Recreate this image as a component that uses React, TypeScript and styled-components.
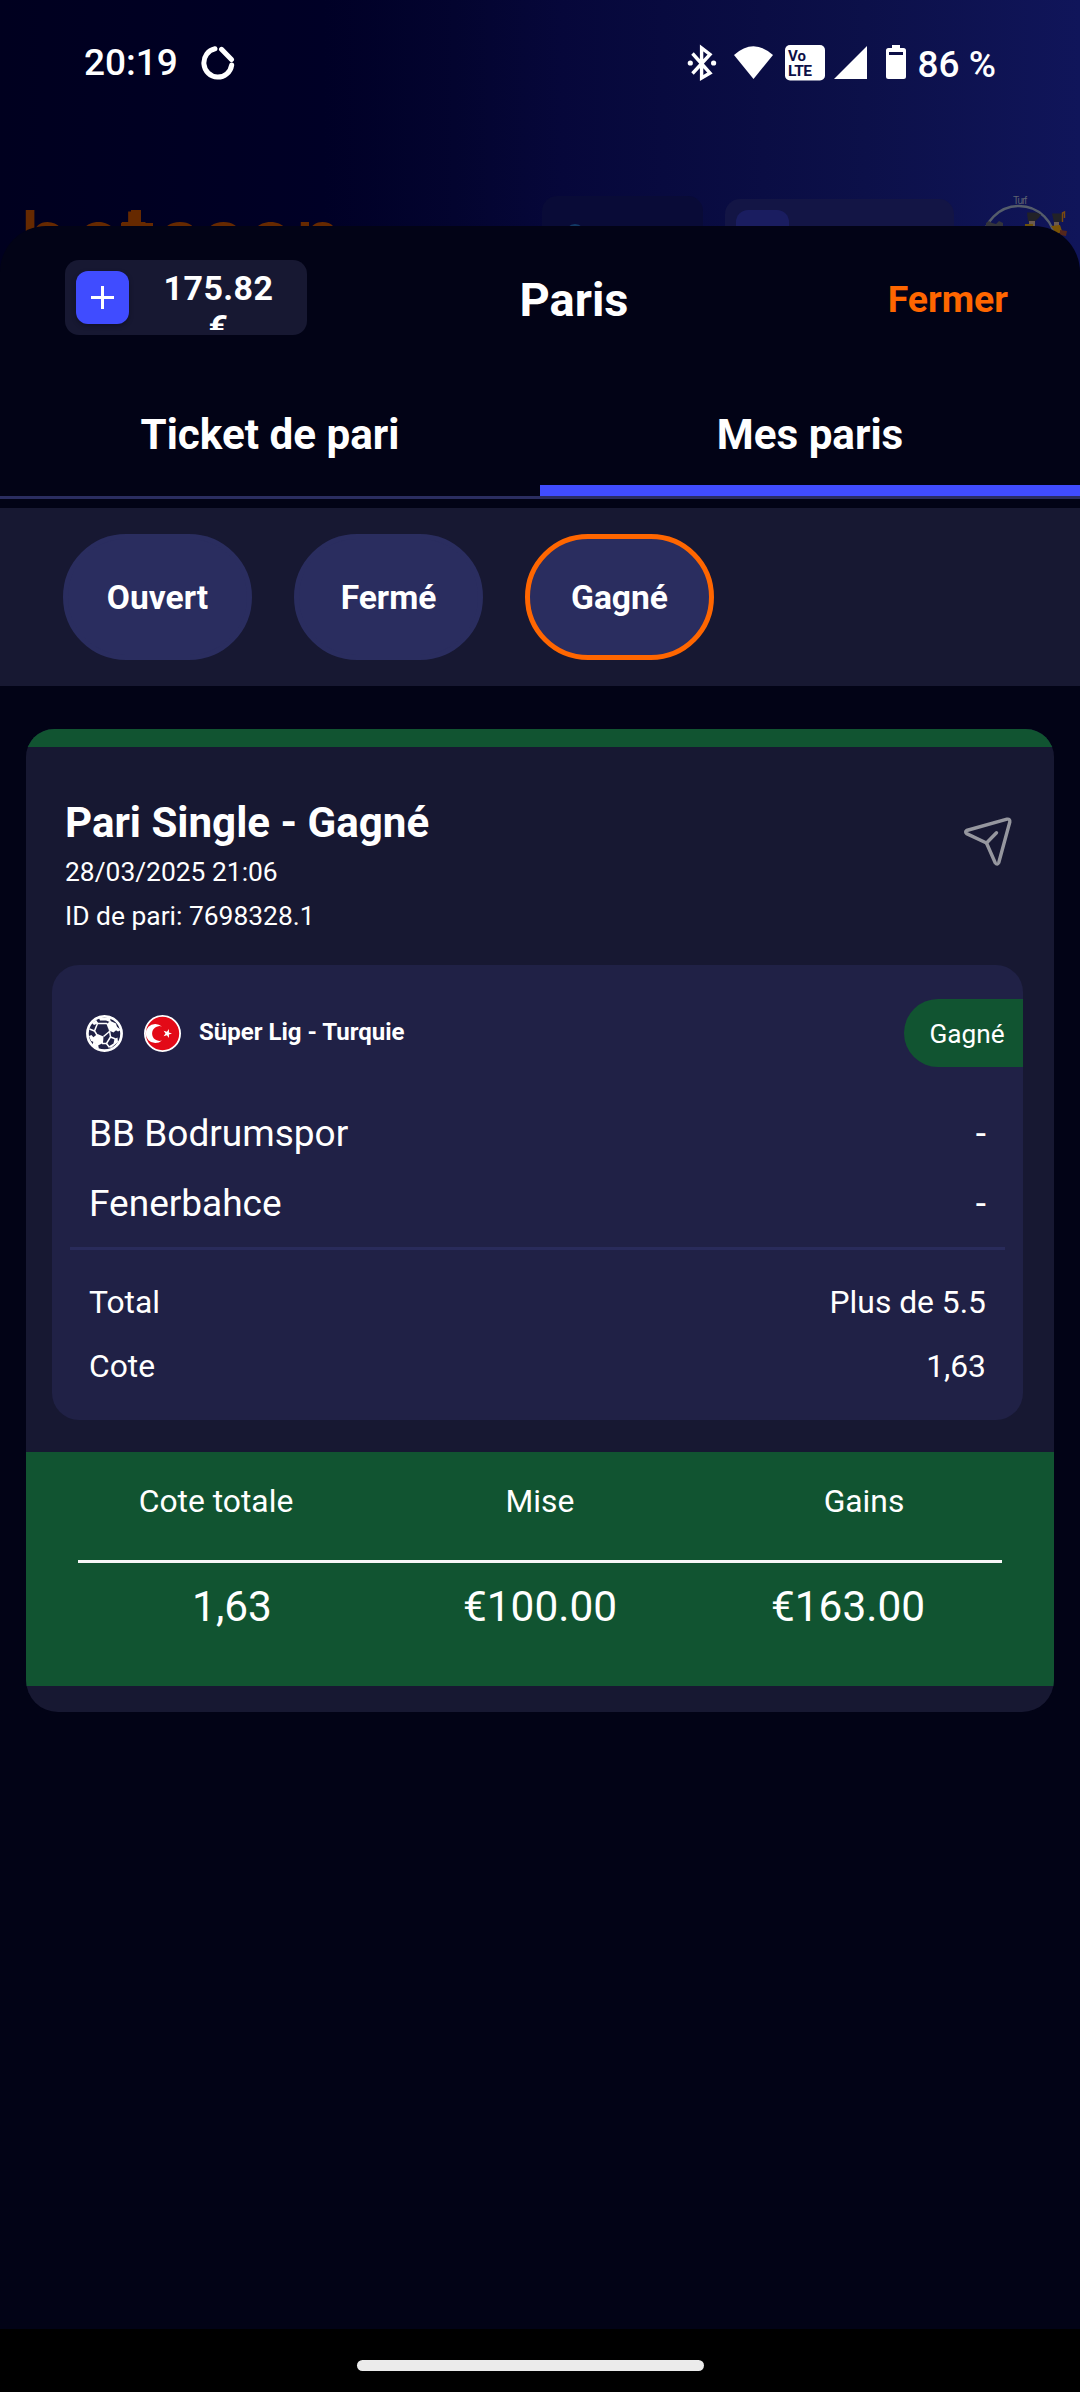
import React from "react";
import styled, { createGlobalStyle } from "styled-components";

const GlobalStyle = createGlobalStyle`
  *, *::before, *::after { box-sizing: border-box; }
  body { margin: 0; background: #000; font-family: Roboto, "Liberation Sans", sans-serif; color: #fff; }
`;

const Page = styled.div`
  width: 1080px;
  height: 2392px;
  display: flex;
  flex-direction: column;
  overflow: hidden;
  background: linear-gradient(90deg, #00001f 0%, #000026 30%, #03042f 42%, #06073a 52%, #0c1049 80%, #10155a 100%);
`;

const Backdrop = styled.header`
  height: 226px;
  flex: none;
  display: flex;
  flex-direction: column;
  justify-content: space-between;
`;

const StatusBar = styled.div`
  height: 126px;
  padding: 0 84px 0 84px;
  display: flex;
  justify-content: space-between;
  align-items: center;
  font-size: 37px;
  font-weight: 500;
  line-height: 44px;
`;

const StatusGroup = styled.div`
  display: flex;
  align-items: center;
`;

const Clock = styled.span`
  margin-right: 23px;
`;

const BatteryLevel = styled.span`
  margin-left: 9.5px;
  padding-top: 3px;
`;

const AppHeader = styled.div`
  height: 31px;
  padding-left: 24px;
  display: flex;
  align-items: flex-start;
`;

const BrandMark = styled.svg`
  display: block;
  flex: none;
  margin: 15px 202px 0 0;
`;

const GhostButton = styled.div<{ $w: number; $top: number; $fill: string; $gap: number }>`
  width: ${(p) => p.$w}px;
  height: 74px;
  margin: ${(p) => p.$top}px ${(p) => p.$gap}px 0 0;
  flex: none;
  border-radius: 15px;
  background: ${(p) => p.$fill};
  padding: 11px;
`;

const GhostIcon = styled.div`
  width: 53px;
  height: 53px;
  border-radius: 12px;
  background: #1a1d60;
`;

const GhostDot = styled.div`
  width: 20px;
  height: 20px;
  margin: 17px 0 0 12px;
  border-radius: 50%;
  background: #123a66;
`;

const CarouselArt = styled.svg`
  display: block;
  flex: none;
`;

const Sheet = styled.main`
  position: relative;
  flex: 1;
  display: flex;
  flex-direction: column;
  background: #020316;
  border-radius: 46px 46px 0 0;
`;

const SheetHeader = styled.div`
  height: 144px;
  flex: none;
  display: grid;
  grid-template-columns: 1fr auto 1fr;
  align-items: center;
  padding: 3px 72px 0 65px;
`;

const Balance = styled.div`
  width: 242px;
  height: 75px;
  margin-top: -5px;
  display: flex;
  align-items: center;
  padding: 0 11px;
  border-radius: 14px;
  background: #171832;
`;

const AddButton = styled.button`
  width: 53px;
  height: 53px;
  flex: none;
  padding: 0;
  border: 0;
  border-radius: 12px;
  background: #404cff;
  display: grid;
  place-items: center;
  box-shadow: 0 2px 5px rgba(0, 0, 0, 0.3);
`;

const Amount = styled.div`
  flex: 1;
  height: 65px;
  padding: 4px 12px 0 24px;
  overflow: hidden;
  text-align: center;
  font-size: 34px;
  font-weight: 700;
  line-height: 39.5px;
  letter-spacing: 0.4px;
`;

const Title = styled.h1`
  margin: 0;
  padding-left: 75px;
  font-size: 47px;
  line-height: 56px;
  font-weight: 700;
`;

const CloseLink = styled.button`
  justify-self: end;
  padding: 0 0 2px;
  border: 0;
  background: none;
  color: #ff6600;
  font: 700 37.4px/46px Roboto, sans-serif;
`;

const Tabs = styled.nav`
  height: 129px;
  flex: none;
  display: grid;
  grid-template-columns: 1fr 1fr;
  border-bottom: 3px solid #2a2d60;
`;

const Tab = styled.button<{ $active?: boolean }>`
  padding: 14px 0 0;
  border: 0;
  border-bottom: 11px solid ${(p) => (p.$active ? "#404cff" : "transparent")};
  background: none;
  color: #fff;
  font: 700 42.2px/50px Roboto, sans-serif;
`;

const Filters = styled.div`
  height: 178px;
  flex: none;
  margin-top: 9px;
  padding: 26px 63px;
  display: flex;
  gap: 42px;
  background: #171832;
`;

const Pill = styled.button<{ $active?: boolean }>`
  width: 189px;
  height: 126px;
  padding: 2px 0 0;
  border: 5px solid ${(p) => (p.$active ? "#ff6600" : "#2a2d5f")};
  border-radius: 63px;
  background: #2a2d5f;
  color: #fff;
  font: 700 33.6px/40px Roboto, sans-serif;
`;

const Card = styled.article`
  width: 1028px;
  height: 983px;
  flex: none;
  margin: 43px 26px 0;
  border-radius: 28px 28px 32px 32px;
  overflow: hidden;
  background: #171832;
  display: flex;
  flex-direction: column;
`;

const CardStripe = styled.div`
  height: 18px;
  flex: none;
  background: #115431;
`;

const CardHead = styled.div`
  height: 218px;
  flex: none;
  padding: 51px 41px 0 39px;
  display: flex;
  justify-content: space-between;
`;

const BetTitle = styled.h2`
  margin: 0 0 2px;
  font-size: 42.1px;
  line-height: 50px;
  font-weight: 700;
`;

const Meta = styled.div`
  font-size: 26.4px;
  line-height: 44px;
`;

const Share = styled.svg`
  display: block;
  margin-top: 17px;
`;

const Selection = styled.section`
  width: 971px;
  height: 455px;
  flex: none;
  margin-left: 26px;
  border-radius: 27px;
  background: #202146;
  display: flex;
  flex-direction: column;
`;

const League = styled.div`
  height: 136px;
  flex: none;
  padding-left: 34px;
  display: flex;
  align-items: center;
  font-size: 24px;
  font-weight: 700;
`;

const LeagueName = styled.span`
  margin-left: 18px;
  padding-bottom: 2px;
  flex: 1;
`;

const Flag = styled.svg`
  display: block;
  margin-left: 21px;
`;

const Badge = styled.div`
  width: 119px;
  height: 68px;
  padding: 2px 0 0 25.5px;
  border-radius: 34px 0 0 34px;
  background: #115431;
  font-size: 26.2px;
  font-weight: 400;
  line-height: 66px;
`;

const Row = styled.div<{ $size: number; $h: number }>`
  height: ${(p) => p.$h}px;
  flex: none;
  padding: 0 37px;
  display: flex;
  justify-content: space-between;
  align-items: center;
  font-size: ${(p) => p.$size}px;
`;

const Teams = styled.div`
  padding-bottom: 5px;
  margin: 0 18px;
  border-bottom: 3px solid #292b5b;
  & > div { padding: 0 19px; }
`;

const Odds = styled.div`
  padding-top: 20px;
`;

const Summary = styled.section`
  height: 234px;
  flex: none;
  margin-top: 32px;
  background: #115431;
`;

const Labels = styled.div`
  height: 108px;
  padding: 0 28px 10px;
  display: grid;
  grid-template-columns: repeat(3, 1fr);
  align-items: center;
  text-align: center;
  font-size: 31.8px;
`;

const Values = styled.div`
  margin: 0 52px;
  padding-top: 16.5px;
  border-top: 3px solid #f7f7f7;
  display: grid;
  grid-template-columns: repeat(3, 1fr);
  text-align: center;
  font-size: 42.4px;
  line-height: 54px;
`;

const NavBar = styled.footer`
  height: 63px;
  flex: none;
  padding-top: 31px;
  background: #000;
  display: flex;
  justify-content: center;
`;

const HomeHandle = styled.div`
  width: 347px;
  height: 11px;
  margin-right: 19px;
  border-radius: 6px;
  background: #ebebeb;
`;

const Brand = () => (
  <BrandMark width="316" height="64" viewBox="24 210 316 64" fill="#662900">
    <text fontFamily="Inter, sans-serif" fontSize="80" fontWeight="500" y="266" x="20 74.5 121 158 201.5 246.5 295">betsson</text>
    <rect x="131" y="210" width="10" height="16" />
    <rect x="121" y="223" width="32" height="4" />
  </BrandMark>
);

const DataSaver = () => (
  <svg width="34" height="36" viewBox="0 0 34 36" fill="none" stroke="#fff" strokeWidth="5" strokeLinecap="round">
    <path d="M14 3.800A14 14.300 0 1 0 30.700 20" />
    <path d="M20.500 4.300L30.500 14.500" />
  </svg>
);

const StatusIcons = () => (
  <svg width="222" height="38" viewBox="687 44 222 38">
    <path d="M693.500 53.500L711 73L702.600 78V48L711 54.500L693.500 73.500" fill="none" stroke="#fff" strokeWidth="3.400" />
    <circle cx="691.300" cy="63" r="2.600" fill="#fff" />
    <circle cx="714.600" cy="63" r="2.600" fill="#fff" />
    <path d="M735 55Q754.500 37.500 774 55L754.500 79Z" fill="#fff" />
    <rect x="786" y="45" width="40" height="35.500" rx="5" fill="#fff" />
    <g fill="#0c0f46" fontFamily="Roboto, sans-serif" fontWeight="700">
      <text x="789" y="60.500" fontSize="15">Vo</text>
      <text x="789" y="76" fontSize="15.500" textLength="24">LTE</text>
    </g>
    <path d="M868 46V79H835Z" fill="#fff" />
    <path d="M893 45h8v3h3.500a2.500 2.500 0 0 1 2.500 2.500v26a2.500 2.500 0 0 1-2.500 2.500h-15a2.500 2.500 0 0 1-2.500-2.500v-26a2.500 2.500 0 0 1 2.500-2.500h3.500z" fill="#fff" />
    <rect x="890" y="52" width="14" height="3" fill="#0c0f46" />
  </svg>
);

const Carousel = () => (
  <CarouselArt width="92" height="80" viewBox="982 195 92 80">
    <text x="1013" y="204" fontSize="10" fontFamily="Liberation Sans, sans-serif" fill="#5d6270" textLength="14">Turf</text>
    <circle cx="1019" cy="242" r="36" fill="none" stroke="#555d6b" strokeWidth="2.400" />
    <path d="M986 223l3-2 3 2 4 1 3-3 4 2v6h-17z" fill="#33343b" />
    <path d="M1027 212.500h9l5 2-2 3-4 4h-7z" fill="#222227" />
    <path d="M1029 221h6v5h-6z" fill="#6b5b50" />
    <path d="M1025 224h8v5h-8z" fill="#6d5208" />
    <path d="M1052 213.500h10l1 8-9 1z" fill="#222227" />
    <path d="M1062.500 222V213l2-1v6" fill="none" stroke="#7a4a10" strokeWidth="1.400" />
    <path d="M1054 222h5v4h-5z" fill="#6b5b50" />
    <path d="M1051 226l9-1 2 6-5 4z" fill="#7a5406" />
    <path d="M1060 230l7 1-1 5-6-1z" fill="#54271c" />
  </CarouselArt>
);

const Ball = () => (
  <svg width="37" height="37" viewBox="0 0 37 37">
    <circle cx="18.500" cy="18.500" r="17.100" fill="#202146" stroke="#fff" strokeWidth="2.700" />
    <g fill="none" stroke="#fff" strokeWidth="1.500">
      <path d="M21 8.500L11.500 8.500L8.500 16L11 20M23.500 15.500L24.500 22L20.500 28.500L16 28.500" />
      <path d="M17.500 21.500L23.500 16.500" />
      <path d="M11.500 8.500L9.500 5.500M24.500 22L29.500 24M20.500 28.500L23.500 32.500M8.500 16L3.500 14" />
    </g>
    <g fill="#fff">
      <path d="M20.500 9L24.500 6L30 8.500L31.500 14L27.500 17.500L23 15.500Z" />
      <path d="M7 22.500L11.500 19L17.500 21.500L17 28L12 30.500L7.500 27.500Z" />
      <path d="M30 11L35 15L32 16.500L29.500 15Z" />
      <path d="M7 27L12 29.500L13 34L7 31Z" />
      <path d="M28.500 24L31.500 22.500L32 27L25 33L22.500 31.500L27.500 28.500Z" />
      <path d="M13 3L24 3L25 7.500L20 5.500L14 5.500Z" />
      <path d="M3 21L5.500 20L8 23L8 27L5 26Z" />
      <path d="M6 8L10 5L11.500 8.500L8 10Z" />
    </g>
  </svg>
);

const Turkey = () => (
  <Flag width="37" height="37" viewBox="0 0 37 37">
    <circle cx="18.500" cy="18.500" r="17.600" fill="#e30a17" stroke="#fff" strokeWidth="1.800" />
    <path d="M18.500 11.500A9.600 9.600 0 1 0 18.500 25.500A7.400 7.400 0 1 1 18.500 11.500Z" fill="#fff" transform="translate(-0.600 0)" />
    <path d="M28 18.500L24.900 19.600L25 22.900L22.900 20.300L19.600 21.200L21.500 18.500L19.600 15.800L22.900 16.700L25 14.100L24.900 17.400Z" fill="#fff" />
  </Flag>
);

export default function App() {
  return (
    <Page>
      <GlobalStyle />
      <Backdrop>
        <StatusBar>
          <StatusGroup>
            <Clock>20:19</Clock>
            <DataSaver />
          </StatusGroup>
          <StatusGroup>
            <StatusIcons />
            <BatteryLevel>86 %</BatteryLevel>
          </StatusGroup>
        </StatusBar>
        <AppHeader>
          <Brand />
          <GhostButton $w={161} $top={1} $fill="#090b37" $gap={22}><GhostDot /></GhostButton>
          <GhostButton $w={229} $top={4} $fill="#131545" $gap={28}><GhostIcon /></GhostButton>
          <Carousel />
        </AppHeader>
      </Backdrop>

      <Sheet>
        <SheetHeader>
          <Balance>
            <AddButton aria-label="Ajouter">
              <svg width="23" height="23" viewBox="0 0 23 23" stroke="#fff" strokeWidth="3">
                <path d="M11.500 0V23M0 11.500H23" />
              </svg>
            </AddButton>
            <Amount>175.82 €</Amount>
          </Balance>
          <Title>Paris</Title>
          <CloseLink>Fermer</CloseLink>
        </SheetHeader>

        <Tabs>
          <Tab>Ticket de pari</Tab>
          <Tab $active>Mes paris</Tab>
        </Tabs>

        <Filters>
          <Pill>Ouvert</Pill>
          <Pill>Fermé</Pill>
          <Pill $active>Gagné</Pill>
        </Filters>

        <Card>
          <CardStripe />
          <CardHead>
            <div>
              <BetTitle>Pari Single - Gagné</BetTitle>
              <Meta>28/03/2025 21:06</Meta>
              <Meta>ID de pari: 7698328.1</Meta>
            </div>
            <Share width="50" height="52" viewBox="0 0 50 52" fill="none" stroke="#96979f" strokeWidth="3.400" strokeLinecap="round" strokeLinejoin="round">
              <path d="M3.500 15.500L44 4.200Q47.200 3.600 46.800 7L35.800 47.500Q34.300 50.500 32.200 47.800L23.500 28L3.600 18.600Q1.800 16.800 3.500 15.500Z" />
              <path d="M23.500 28L33.500 17.800" />
            </Share>
          </CardHead>

          <Selection>
            <League>
              <Ball />
              <Turkey />
              <LeagueName>Süper Lig - Turquie</LeagueName>
              <Badge>Gagné</Badge>
            </League>
            <Teams>
              <Row $size={37} $h={64}><span>BB Bodrumspor</span><span>-</span></Row>
              <Row $size={37} $h={77}><span>Fenerbahce</span><span>-</span></Row>
            </Teams>
            <Odds>
              <Row $size={31.8} $h={64}><span>Total</span><span>Plus de 5.5</span></Row>
              <Row $size={31.8} $h={64}><span>Cote</span><span>1,63</span></Row>
            </Odds>
          </Selection>

          <Summary>
            <Labels><span>Cote totale</span><span>Mise</span><span>Gains</span></Labels>
            <Values><span>1,63</span><span>€100.00</span><span>€163.00</span></Values>
          </Summary>
        </Card>
      </Sheet>

      <NavBar><HomeHandle /></NavBar>
    </Page>
  );
}
